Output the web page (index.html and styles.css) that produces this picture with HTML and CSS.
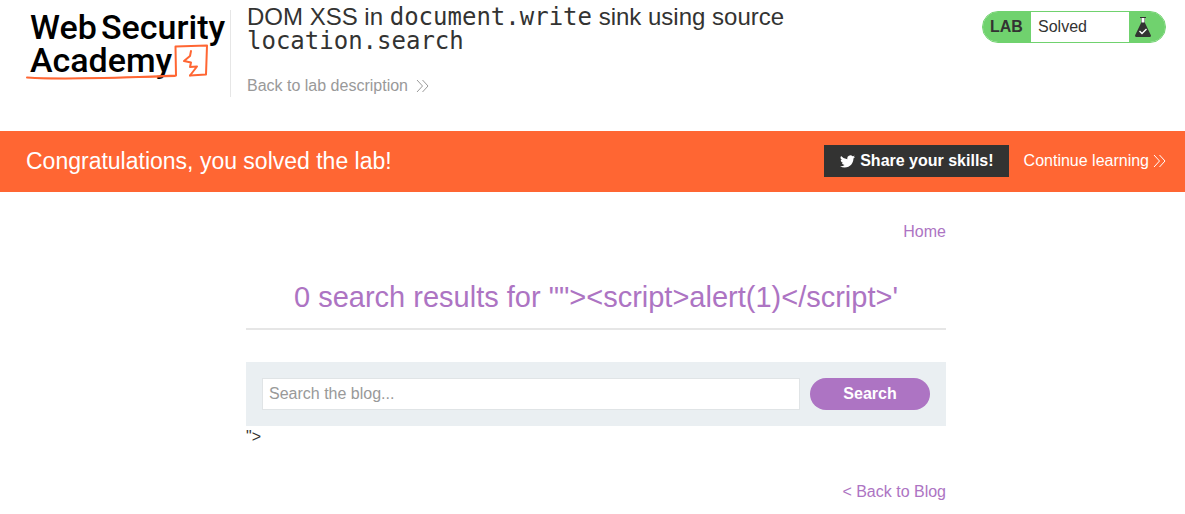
FILE: index.html
```html
<!DOCTYPE html>
<html lang="en">
<head>
<meta charset="utf-8">
<title>DOM XSS in document.write sink using source location.search</title>
<link rel="stylesheet" href="styles.css">
</head>
<body>
<header class="lab-header">
  <a class="logo" href="#" aria-label="Web Security Academy">
    <svg width="204" height="76" viewBox="0 0 204 76">
      <g class="logo-text">
        <text x="4" y="32">Web</text>
        <text x="75" y="32">Security</text>
        <text x="4" y="65">Academy</text>
      </g>
      <g fill="none" stroke="#ff6633" stroke-linejoin="round" stroke-linecap="round">
        <path stroke-width="2" d="M1 70.500C34 72.500 70 71.500 126 69.500L150 68.500L149.500 39.500L181 38.500L180 67.500L164 68.500"/>
        <path stroke-width="1.200" d="M10 71.500C50 72 90 71 149 69.500"/>
        <path stroke-width="2" d="M165 44L164 49L158 54L165 55.500L164 60L171 59.500L164 68.500"/>
      </g>
    </svg>
  </a>
  <div class="title-block">
    <h2 class="lab-title">DOM XSS in <code>document.write</code> sink using source <code>location.search</code></h2>
    <a class="back-link" href="#">Back to lab description
      <svg class="chevrons" width="13" height="12" viewBox="0 0 13 12"><path d="M1 0L6.500 6L1 12M6.500 0L12 6L6.500 12"/></svg>
    </a>
  </div>
  <div class="lab-status">
    <span class="status-tag">LAB</span>
    <span class="status-text">Solved</span>
    <span class="status-icon">
      <svg width="16" height="20" viewBox="0 0 16 20">
        <path fill="#fff" d="M6 1h4v5H6z"/>
        <path fill="#333332" d="M5 0h6v1h-1v5l6 12.500q0 1.500-1.500 1.500h-13Q0 20 0 18.500L6 6V1H5zM6.500 1v4.500h3V1z"/>
        <path fill="none" stroke="#fff" stroke-width="1.400" d="M4.500 14L7 16.500L11.500 12"/>
      </svg>
    </span>
  </div>
</header>

<section class="banner">
  <h3 class="banner-title">Congratulations, you solved the lab!</h3>
  <a class="share" href="#">
    <svg width="15" height="13" viewBox="0 0 24 20"><path fill="#fff" d="M24 2.400a10 10 0 0 1-2.800.8A5 5 0 0 0 23.300.5a10 10 0 0 1-3.100 1.200A4.900 4.900 0 0 0 11.800 6.200 14 14 0 0 1 1.700 1a4.900 4.900 0 0 0 1.500 6.600A5 5 0 0 1 1 7v.1a4.900 4.900 0 0 0 3.900 4.800 5 5 0 0 1-2.200.1 4.900 4.900 0 0 0 4.600 3.400A10 10 0 0 1 0 17.400a14 14 0 0 0 7.500 2.200c9.100 0 14-7.500 14-14V5A10 10 0 0 0 24 2.400z"/></svg>
    Share your skills!
  </a>
  <a class="continue" href="#">Continue learning
    <svg class="chevrons" width="13" height="12" viewBox="0 0 13 12"><path d="M1 0L6.500 6L1 12M6.500 0L12 6L6.500 12"/></svg>
  </a>
</section>

<main class="page">
  <div class="content">
    <nav class="top-nav"><a href="#">Home</a></nav>
    <h1 class="results">0 search results for ""&gt;&lt;script&gt;alert(1)&lt;/script&gt;'</h1>
    <form class="search">
      <input class="search-input" type="text" name="search" placeholder="Search the blog..." aria-label="Search the blog">
      <button class="search-button" type="button">Search</button>
    </form>
    <div class="leftover">"&gt;</div>
    <div class="back-row"><a href="#">&lt; Back to Blog</a></div>
  </div>
</main>
</body>
</html>
```
FILE: styles.css
```css
* {
  box-sizing: border-box;
}

body {
  margin: 0;
  background: #fff;
  color: #333332;
  font: 16px/20px "Liberation Sans", Arial, sans-serif;
}

a {
  text-decoration: none;
}

.lab-header {
  display: flex;
  align-items: flex-start;
  padding: 5px 19px 34px 26px;
}

.logo {
  flex: none;
  padding-top: 2px;
}

.logo svg {
  display: block;
  overflow: visible;
}

.logo-text {
  font: 500 34px Roboto, sans-serif;
  fill: #000;
}

.title-block {
  flex: 0 1 640px;
  padding: 0 0 1px 16px;
  border: 0 solid transparent;
  border-left-width: 1px;
  border-image: linear-gradient(#fff 6px, #e6e6e6 6px) 1;
}

.lab-title {
  margin: 0 0 23px;
  font-size: 24px;
  font-weight: 400;
  line-height: 24px;
}

.lab-title code {
  font-family: "DejaVu Sans Mono", monospace;
  font-size: 24px;
}

.back-link {
  display: inline-flex;
  align-items: center;
  gap: 8px;
  color: #999;
}

.chevrons {
  fill: none;
  stroke: currentColor;
  stroke-width: 1;
}

.lab-status {
  display: flex;
  flex: none;
  height: 32px;
  margin: 6px 0 0 auto;
  overflow: hidden;
  border: 1px solid #70d26e;
  border-radius: 16px;
  line-height: 30px;
}

.status-tag {
  width: 48px;
  padding-left: 7px;
  background: #70d26e;
  font-weight: 700;
}

.status-text {
  width: 98px;
  padding-left: 7px;
}

.status-icon {
  display: flex;
  align-items: center;
  width: 36px;
  padding-left: 6px;
  background: #70d26e;
}

.banner {
  display: flex;
  align-items: center;
  padding: 14px 19px 15px 26px;
  background: #ff6633;
  color: #fff;
}

.banner-title {
  margin: 0 auto 0 0;
  font-size: 23px;
  font-weight: 400;
  line-height: 32px;
}

.share {
  display: flex;
  align-items: center;
  gap: 5px;
  padding: 6px 15px 6px 16px;
  background: #333332;
  color: #fff;
  font-weight: 700;
}

.continue {
  display: flex;
  align-items: center;
  gap: 4px;
  margin-left: 15px;
  color: #fff;
}

.page {
  padding: 30px 19px 0 26px;
}

.content {
  max-width: 700px;
  margin: 0 auto;
}

.top-nav,
.back-row {
  text-align: right;
}

.top-nav a,
.back-row a {
  color: #ad74c3;
}

.results {
  margin: 38px 0 32px;
  padding-bottom: 14px;
  border-bottom: 2px solid #e6e6e6;
  color: #ad74c3;
  font-size: 29px;
  font-weight: 400;
  line-height: 34px;
  text-align: center;
}

.search {
  display: flex;
  gap: 10px;
  padding: 16px;
  background: #eaeff2;
}

.search-input {
  flex: 1;
  min-width: 0;
  height: 32px;
  padding: 0 6px;
  border: 1px solid #e0e4e6;
  background: #fff;
  color: #333332;
  font: inherit;
}

.search-input::placeholder {
  color: #999;
}

.search-button {
  width: 120px;
  height: 32px;
  border: 0;
  border-radius: 16px;
  background: #ad74c3;
  color: #fff;
  font: inherit;
  font-weight: 700;
}

.leftover {
  padding-top: 1px;
}

.back-row {
  padding: 35px 0 10px;
}
```
